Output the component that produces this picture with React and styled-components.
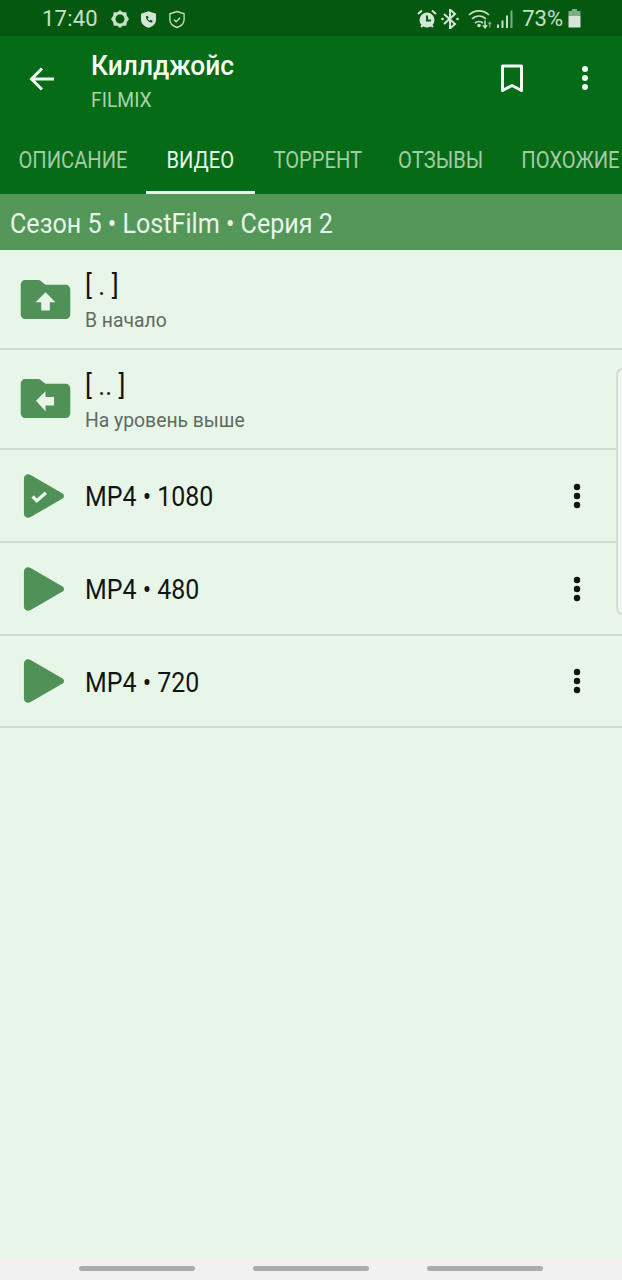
import React from 'react';
import styled, { createGlobalStyle } from 'styled-components';

const GlobalStyle = createGlobalStyle`
  html, body {
    margin: 0;
    padding: 0;
    background: #e8f5e9;
  }
  * {
    box-sizing: border-box;
  }
`;

const Page = styled.div`
  width: 622px;
  height: 1280px;
  display: flex;
  flex-direction: column;
  background: #e8f5e9;
  font-family: Roboto, "Noto Sans", sans-serif;
  overflow: hidden;
  position: relative;
`;

const StatusBar = styled.div`
  height: 36px;
  flex: none;
  display: flex;
  align-items: center;
  justify-content: space-between;
  padding: 2px 41px 0 42px;
  background: #05590f;
  color: #c6e0c8;
`;

const StatusGroup = styled.div`
  display: flex;
  align-items: center;
`;

const StatusSlot = styled.div`
  display: flex;
  flex: none;
  margin-left: ${(p) => p.$left || 0}px;
`;

const StatusText = styled.span`
  font-size: 22px;
  line-height: 26px;
  letter-spacing: ${(p) => p.$spacing || 0}px;
`;

const AppBar = styled.div`
  height: 94px;
  flex: none;
  display: flex;
  align-items: flex-start;
  background: #056b17;
  color: #fff;
`;

const BackButton = styled.div`
  width: 91px;
  height: 86px;
  flex: none;
  padding: 30px 0 0 29px;
`;

const Titles = styled.div`
  flex: 1;
  padding-top: 12px;
`;

const Title = styled.div`
  font-size: 28px;
  line-height: 36px;
  font-weight: 500;
  color: #f4fbf4;
  transform-origin: left center;
  transform: scaleX(0.94);
`;

const Subtitle = styled.div`
  font-size: 21px;
  line-height: 28px;
  margin-top: 2px;
  color: #a8d4ab;
  transform-origin: left center;
  transform: scaleX(0.92);
`;

const AppAction = styled.div`
  width: ${(p) => p.$w}px;
  height: 34px;
  flex: none;
  margin-top: ${(p) => p.$top}px;
  margin-right: ${(p) => p.$right}px;
`;

const Tabs = styled.div`
  height: 64px;
  flex: none;
  display: flex;
  align-items: stretch;
  background: #056b17;
  overflow: hidden;
`;

const Tab = styled.div`
  flex: none;
  width: ${(p) => p.$w}px;
  display: flex;
  justify-content: center;
  padding-top: 15px;
  font-size: 24px;
  line-height: 30px;
  color: ${(p) => (p.$active ? '#e8f5e9' : '#a4cba6')};
  border-bottom: 3px solid ${(p) => (p.$active ? '#e8f5e9' : 'transparent')};
  white-space: nowrap;
`;

const TabLabel = styled.span`
  display: inline-block;
  transform: scaleX(0.84);
`;

const SectionBar = styled.div`
  height: 56px;
  flex: none;
  display: flex;
  align-items: center;
  padding: 2px 0 0 10px;
  background: #559659;
  color: #e8f5e9;
  font-size: 28px;
  white-space: nowrap;
`;

const SectionLabel = styled.span`
  display: inline-block;
  transform-origin: left center;
  transform: scaleX(0.897);
`;

const Row = styled.div`
  height: ${(p) => p.$h}px;
  flex: none;
  display: flex;
  align-items: ${(p) => (p.$folder ? 'flex-start' : 'center')};
  border-bottom: 2px solid #cfdcd0;
  position: relative;
`;

const RowIcon = styled.div`
  width: 85px;
  flex: none;
  display: flex;
  padding-left: ${(p) => p.$left}px;
  padding-top: ${(p) => p.$top || 0}px;
`;

const RowBody = styled.div`
  flex: 1;
  padding-top: ${(p) => p.$top || 0}px;
`;

const RowTitle = styled.div`
  font-size: 28px;
  line-height: 34px;
  color: #111511;
  transform-origin: left center;
  transform: scaleX(${(p) => p.$scale});
  white-space: pre;
`;

const RowHint = styled.div`
  font-size: 21px;
  line-height: 26px;
  margin-top: 4px;
  color: #5f6b60;
  transform-origin: left center;
  transform: scaleX(0.92);
`;

const RowMenu = styled.div`
  width: 10px;
  flex: none;
  margin-right: 40px;
  display: flex;
`;

const EdgeHandle = styled.div`
  position: absolute;
  top: 368px;
  right: -8px;
  width: 14px;
  height: 247px;
  border: 2px solid #d3dfd4;
  border-radius: 8px;
  background: #eef6ef;
`;

const NavBar = styled.div`
  position: absolute;
  left: 0;
  right: 0;
  bottom: 0;
  height: 22px;
  padding: 8px 79px 0;
  display: flex;
  justify-content: space-between;
  align-items: flex-start;
  background: #f1f1f1;
`;

const NavPill = styled.div`
  width: 116px;
  height: 5px;
  border-radius: 3px;
  background: #acacac;
`;

const Dots = ({ size = 3, gap = 9, color }) => (
  <svg width="10" height="30" viewBox="0 0 10 30">
    <circle cx="5" cy={15 - gap} r={size} fill={color} />
    <circle cx="5" cy="15" r={size} fill={color} />
    <circle cx="5" cy={15 + gap} r={size} fill={color} />
  </svg>
);

const Folder = ({ arrow }) => (
  <svg width="51" height="40" viewBox="0 0 52 42">
    <path d="M5 1h13c1.400 0 2.600.5 3.600 1.500L26 6h21c2.800 0 5 2.200 5 5v26c0 2.800-2.200 5-5 5H5c-2.800 0-5-2.200-5-5V6c0-2.800 2.200-5 5-5z" fill="#4f9156" />
    {arrow === 'up' && <path d="M26 14l10.500 10.500H30.500V33h-9v-8.500H15.500z" fill="#e8f5e9" />}
    {arrow === 'left' && <path d="M16 24l10-10v6h9v9h-9v6z" fill="#e8f5e9" />}
  </svg>
);

const PlayIcon = ({ checked }) => (
  <svg width="42" height="46" viewBox="0 0 44 48">
    <path d="M1 6C1 2 4.500 0 8 2l33 19c2.600 1.500 2.600 4.500 0 6L8 46c-3.500 2-7 0-7-4z" fill="#4f9156" />
    {checked && <path d="M10 24.500l4.500 4.500 9.500-8.500" fill="none" stroke="#e8f5e9" strokeWidth="3.500" />}
  </svg>
);

export default function App() {
  return (
    <Page>
      <GlobalStyle />
      <StatusBar>
        <StatusGroup>
          <StatusText $spacing={0.2}>17:40</StatusText>
          <StatusSlot $left={13}>
            <svg width="18" height="18" viewBox="0 0 20 20">
              <path d="M10 0l3 2.600 4-.2.600 3.900L20 10l-2.400 3.700-.6 3.900-4-.2L10 20l-3-2.600-4 .2-.6-3.900L0 10l2.400-3.700.6-3.900 4 .2zM10 5a5 5 0 1 0 0 10 5 5 0 0 0 0-10z" fill="#c6e0c8" />
            </svg>
          </StatusSlot>
          <StatusSlot $left={12}>
            <svg width="15" height="19" viewBox="0 0 18 20">
              <path d="M9 0l9 3v7c0 5-3.800 8.500-9 10-5.200-1.500-9-5-9-10V3z" fill="#d6e6d6" />
              <path d="M6 6l2-.5 1.200 2.500-1.200 1c.5 1.200 1.300 2 2.500 2.500l1-1.200 2.500 1.200-.5 2c-3.500.5-8-3.500-7.500-7.500z" fill="#05590f" />
            </svg>
          </StatusSlot>
          <StatusSlot $left={13}>
            <svg width="16" height="19" viewBox="0 0 18 20">
              <path d="M9 1l8 2.600V10c0 4.300-3.300 7.500-8 9-4.700-1.500-8-4.700-8-9V3.600z" fill="none" stroke="#c6e0c8" strokeWidth="1.500" />
              <path d="M5.500 10l2.500 2.500 4.500-4.500" fill="none" stroke="#c6e0c8" strokeWidth="1.500" />
            </svg>
          </StatusSlot>
        </StatusGroup>
        <StatusGroup>
          <svg width="20" height="20" viewBox="0 0 20 20">
            <circle cx="10" cy="11" r="7.500" fill="#d6e6d6" />
            <path d="M10 6.500V11.500h4" fill="none" stroke="#05590f" strokeWidth="2" />
            <path d="M1 5l4-3.500M19 5l-4-3.500M4 18l2-2M16 18l-2-2" stroke="#d6e6d6" strokeWidth="2" />
          </svg>
          <StatusSlot $left={4}>
            <svg width="18" height="20" viewBox="0 0 18 20">
              <path d="M3 5l11 10-5 4.500V.500l5 4.500L3 15" fill="none" stroke="#d6e6d6" strokeWidth="2" />
              <circle cx="1.500" cy="10" r="1.300" fill="#d6e6d6" />
              <circle cx="16.500" cy="10" r="1.300" fill="#d6e6d6" />
            </svg>
          </StatusSlot>
          <StatusSlot $left={9}>
            <svg width="24" height="20" viewBox="0 0 24 20">
              <path d="M1 6c5.500-5.500 14.500-5.500 20 0M4 10c4-4 10-4 14 0M7 14c2.300-2 5.700-2 8 0" fill="none" stroke="#c6e0c8" strokeWidth="1.700" />
              <circle cx="11" cy="16.500" r="1.800" fill="#c6e0c8" />
              <path d="M17 11.500v7m-2.200-2.400l2.200 2.800 2.200-2.800" fill="none" stroke="#c6e0c8" strokeWidth="1.500" />
              <path d="M21.800 18.500v-5m-1.500 1.700l1.500-2 1.500 2" fill="none" stroke="#7fae83" strokeWidth="1.200" />
            </svg>
          </StatusSlot>
          <StatusSlot $left={5}>
            <svg width="16" height="20" viewBox="0 0 16 20">
              <path d="M0 15.500h2V19H0zM4.500 11.500h2V19h-2zM9 6.500h2V19H9z" fill="#c6e0c8" />
              <path d="M13.500 1.500h2V19h-2z" fill="#7fae83" />
            </svg>
          </StatusSlot>
          <StatusSlot $left={9}>
            <StatusText>73%</StatusText>
          </StatusSlot>
          <StatusSlot $left={5}>
            <svg width="13" height="20" viewBox="0 0 13 20">
              <path d="M4 0h5v2H4z" fill="#7fae83" />
              <path d="M0.500 2h12v5H.5z" fill="#7fae83" />
              <path d="M.5 7h12v11.500H.5z" fill="#d6e6d6" />
            </svg>
          </StatusSlot>
        </StatusGroup>
      </StatusBar>

      <AppBar>
        <BackButton>
          <svg width="26" height="26" viewBox="0 0 26 26">
            <path d="M25 13H3M13 2.500L2.500 13 13 23.500" fill="none" stroke="#f1f8f1" strokeWidth="3" />
          </svg>
        </BackButton>
        <Titles>
          <Title>Киллджойс</Title>
          <Subtitle>FILMIX</Subtitle>
        </Titles>
        <AppAction $w={24} $top={28} $right={56}>
          <svg width="24" height="30" viewBox="0 0 24 30">
            <path d="M2.500 2h19v24.500L12 21.500 2.500 26.500z" fill="none" stroke="#f4fbf4" strokeWidth="3" strokeLinejoin="round" />
          </svg>
        </AppAction>
        <AppAction $w={10} $top={27} $right={32}>
          <Dots color="#f4fbf4" />
        </AppAction>
      </AppBar>

      <Tabs>
        <Tab $w={146}><TabLabel>ОПИСАНИЕ</TabLabel></Tab>
        <Tab $w={109} $active><TabLabel>ВИДЕО</TabLabel></Tab>
        <Tab $w={125}><TabLabel>ТОРРЕНТ</TabLabel></Tab>
        <Tab $w={122}><TabLabel>ОТЗЫВЫ</TabLabel></Tab>
        <Tab $w={136}><TabLabel>ПОХОЖИЕ</TabLabel></Tab>
      </Tabs>

      <SectionBar>
        <SectionLabel>Сезон 5 • LostFilm • Серия 2</SectionLabel>
      </SectionBar>

      <Row $h={100} $folder>
        <RowIcon $left={20} $top={29}><Folder arrow="up" /></RowIcon>
        <RowBody $top={19}>
          <RowTitle $scale={0.93}>[ . ]</RowTitle>
          <RowHint>В начало</RowHint>
        </RowBody>
      </Row>
      <Row $h={100} $folder>
        <RowIcon $left={20} $top={28}><Folder arrow="left" /></RowIcon>
        <RowBody $top={19}>
          <RowTitle $scale={0.93}>[ .. ]</RowTitle>
          <RowHint>На уровень выше</RowHint>
        </RowBody>
      </Row>
      {[
        ['MP4 • 1080', true, 93],
        ['MP4 • 480', false, 93],
        ['MP4 • 720', false, 92],
      ].map(([label, checked, height]) => (
        <Row key={label} $h={height}>
          <RowIcon $left={23}><PlayIcon checked={checked} /></RowIcon>
          <RowBody $top={3}><RowTitle $scale={0.89}>{label}</RowTitle></RowBody>
          <RowMenu><Dots size={3.2} color="#111511" /></RowMenu>
        </Row>
      ))}

      <EdgeHandle />
      <NavBar>
        <NavPill />
        <NavPill />
        <NavPill />
      </NavBar>
    </Page>
  );
}
